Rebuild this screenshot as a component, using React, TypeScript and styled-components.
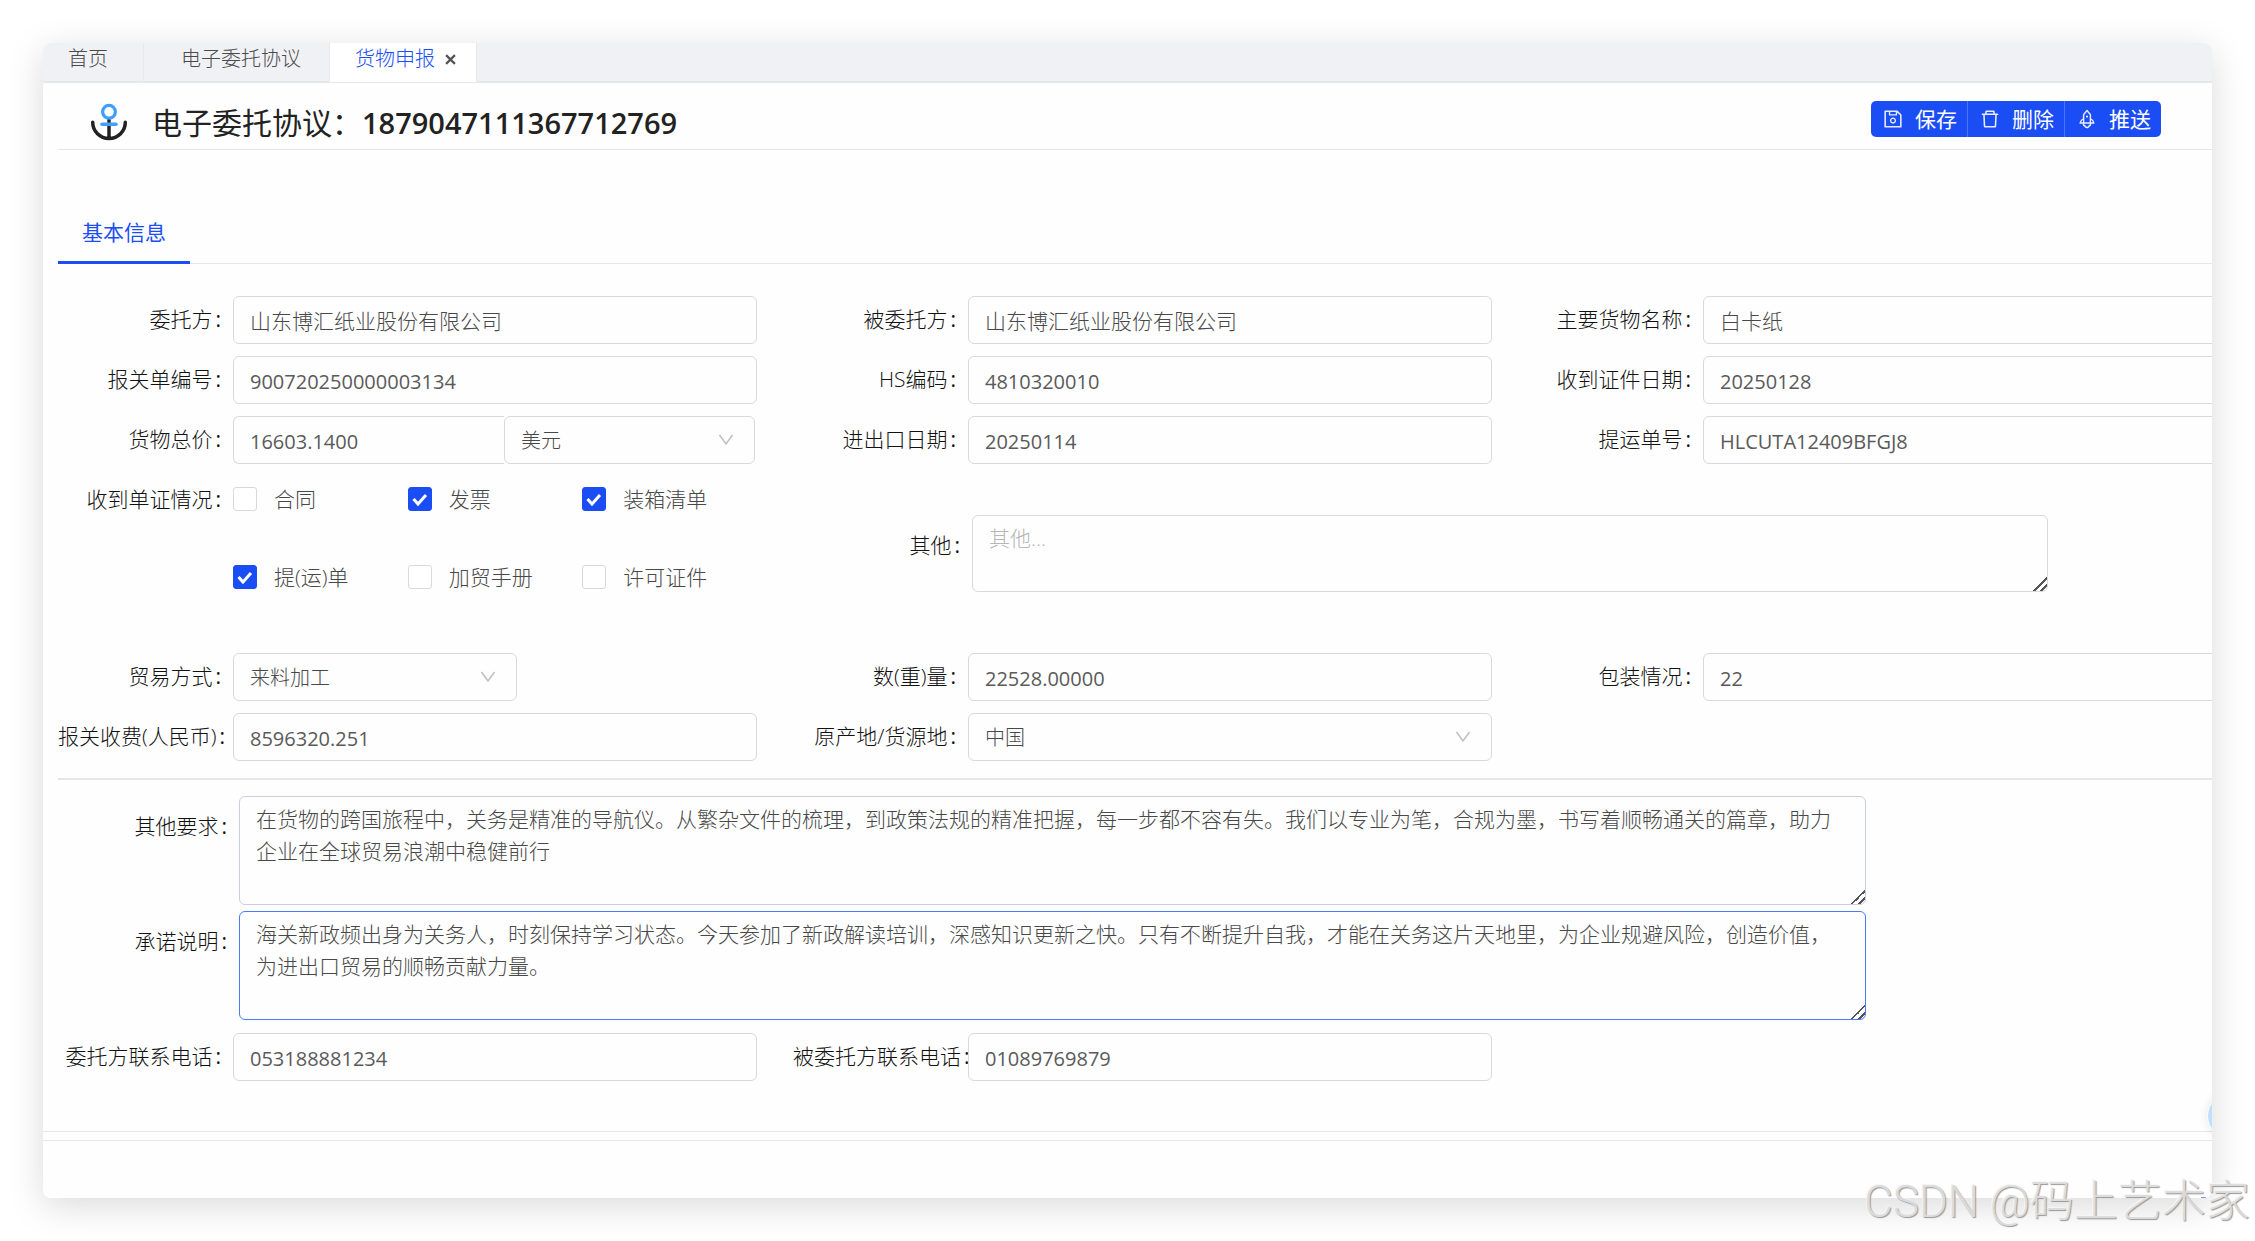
import React from 'react';
import styled, { createGlobalStyle, css } from 'styled-components';
import { AiOutlineDelete, AiOutlineRocket, AiOutlineSave } from 'react-icons/ai';

const sans = `"Open Sans", "Noto Sans CJK SC", "Noto Sans", sans-serif`;
const primary = '#1b4df5';
const line = '#e6e6e6';
const fieldBorder = '#d9d9d9';

const GlobalStyle = createGlobalStyle`
  *, *::before, *::after { box-sizing: border-box; }
  body { margin: 0; background: #fff; }
  body, button, input, select, textarea { font-family: ${sans}; }
`;

const Page = styled.div`
  display: flex;
  min-height: 100vh;
  padding: 43px;
`;

const Card = styled.main`
  position: relative;
  flex: 1;
  min-width: 0;
  overflow: hidden;
  border-radius: 8px;
  background: #fefefe;
`;

const Shadow = styled.div`
  display: flex;
  flex: 1;
  min-width: 0;
  border-radius: 8px;
  box-shadow: 0 8px 36px rgba(0, 0, 0, 0.15);
`;

const TabBar = styled.nav`
  display: flex;
  height: 40px;
  background: #f0f1f5;
  box-shadow: inset 0 -2px #e6e7ea;
`;

const PageTab = styled.div<{ $active?: boolean; $start: number; $end: number }>`
  display: flex;
  gap: 6px;
  height: 39px;
  padding: 0 ${p => p.$end}px 0 ${p => p.$start}px;
  border-right: 1px solid #e8e9ec;
  background: ${p => (p.$active ? '#fff' : 'transparent')};
  line-height: 32px;
`;

const PageLink = styled.a<{ $active?: boolean }>`
  color: ${p => (p.$active ? primary : '#4a4a4a')};
  font-size: 20px;
  font-weight: 300;
  text-decoration: none;
`;

const CloseButton = styled.button`
  display: flex;
  align-items: center;
  height: 32px;
  padding: 0 4px;
  border: 0;
  background: none;
  color: #555;
`;

const Header = styled.header`
  display: flex;
  justify-content: space-between;
  height: 67px;
  margin-left: 15px;
  padding: 18px 51px 0 32px;
  border-bottom: 1px solid ${line};
`;

const Title = styled.h1`
  display: flex;
  align-items: center;
  gap: 24px;
  height: 44px;
  margin: 0;
  color: #222;
  font-size: 30px;
  font-weight: 400;
  line-height: 44px;
  white-space: nowrap;
`;

const Number = styled.span`
  font-size: 29px;
  font-weight: 600;
`;

const ButtonGroup = styled.div`
  display: flex;
  height: 36px;
  overflow: hidden;
  border-radius: 5px;
  background: ${primary};
`;

const ActionButton = styled.button`
  display: flex;
  align-items: center;
  gap: 11px;
  padding: 0 10px 0 11px;
  border: 0;
  background: none;
  color: #fff;
  font-size: 21px;
  line-height: 36px;

  & + & { border-left: 1px solid #4d76fa; }
  svg { width: 22px; height: 22px; opacity: 0.9; }
`;

const SectionTabs = styled.div`
  display: flex;
  align-items: flex-end;
  height: 114px;
  margin-left: 15px;
  box-shadow: inset 0 -1px ${line};
`;

const SectionTab = styled.button`
  height: 64px;
  padding: 0 24px;
  border: 0;
  border-bottom: 3px solid ${primary};
  background: none;
  color: ${primary};
  font-size: 21px;
`;

const Form = styled.form`
  padding: 32px 0 50px 15px;
`;

const Grid = styled.div<{ $after?: number }>`
  display: grid;
  grid-template-columns: repeat(3, minmax(0, 1fr));
  row-gap: 12px;
  margin-right: -51px;
  margin-bottom: ${p => p.$after ?? 0}px;
`;

const Field = styled.div`
  display: flex;
  padding-right: 36px;
`;

const WideField = styled(Field)<{ $end: number }>`
  padding-right: ${p => p.$end}px;
`;

const OtherField = styled(WideField)`
  grid-column: span 2;
  margin-top: 39px;
`;

const labelText = css`
  flex: none;
  width: 175px;
  color: #111;
  font-size: 21px;
  font-weight: 300;
  line-height: 46px;
  text-align: right;
  white-space: nowrap;

  &::after { content: ':'; margin: 0 12px 0 3px; font-weight: 400; }
`;

const Label = styled.label`${labelText}`;

const GroupLabel = styled.span`${labelText}`;

const AreaLabel = styled(Label)<{ $width: number }>`
  width: ${p => p.$width}px;
  padding-top: 7px;
`;

const box = css`
  border: 1px solid ${fieldBorder};
  border-radius: 6px;
  outline: none;
  background: #fefefe;
  color: #484848;
  font-weight: 300;
`;

const TextInput = styled.input<{ $latin?: boolean; $joined?: boolean }>`
  ${box}
  flex: 1;
  min-width: 0;
  height: 48px;
  padding: ${p => (p.$latin ? 3 : 0)}px 16px 0;
  ${p => (p.$latin ? 'color: #5a5a5a; font-size: 20px; font-weight: 400;' : 'font-size: 21px;')}
  ${p => p.$joined && 'border-right: 0; border-radius: 6px 0 0 6px;'}
`;

const SelectWrap = styled.div<{ $width?: number }>`
  position: relative;
  ${p => (p.$width ? `flex: none; width: ${p.$width}px;` : 'flex: 1;')}

  svg {
    position: absolute;
    top: 18px;
    right: 21px;
    pointer-events: none;
  }
`;

const Select = styled.select`
  ${box}
  width: 100%;
  height: 48px;
  padding: 0 16px;
  appearance: none;
  font-size: 20px;
`;

const PriceGroup = styled.div`
  display: flex;
  flex: 1;
  min-width: 0;
  padding-right: 2px;
`;

const CheckGrid = styled.div`
  display: grid;
  flex: 1;
  grid-template-columns: repeat(3, minmax(0, 1fr));
  grid-auto-rows: 46px;
  row-gap: 32px;
`;

const CheckLabel = styled.label`
  display: flex;
  align-items: center;
  gap: 17px;
  color: #484848;
  font-size: 21px;
  font-weight: 300;
  line-height: 26px;
  white-space: nowrap;
`;

const CheckBox = styled.span`
  display: grid;
  width: 24px;
  height: 24px;

  input, svg { grid-area: 1 / 1; }
  input {
    width: 24px;
    height: 24px;
    margin: 0;
    border: 1px solid ${fieldBorder};
    border-radius: 3px;
    appearance: none;
    background: #fff;
  }
  input:checked { border-color: ${primary}; background: ${primary}; }
  svg { z-index: 1; visibility: hidden; pointer-events: none; }
  input:checked + svg { visibility: visible; }
`;

const TextArea = styled.textarea<{ $height: number; $tone?: string }>`
  ${box}
  flex: 1;
  min-width: 0;
  height: ${p => p.$height}px;
  padding: 6px 16px;
  border-color: ${p => p.$tone ?? fieldBorder};
  font-size: 21px;
  line-height: 32px;
  &::placeholder { color: #b5b5b5; }
  &::-webkit-resizer {
    background: linear-gradient(135deg, transparent 52%, #555 52%, #555 60%, transparent 60%, transparent 76%, #555 76%, #555 84%, transparent 84%);
  }
`;

const Divider = styled.hr`
  height: 2px;
  margin: 17px 0 16px;
  border: 0;
  background: #e6e6e6;
`;

const Stack = styled.div`
  display: grid;
  row-gap: 6px;
  margin-bottom: 13px;
`;

const Footer = styled.footer`
  height: 10px;
  border-top: 1px solid ${line};
  border-bottom: 1px solid ${line};
`;

const FloatBall = styled.div`
  position: absolute;
  right: -41px;
  bottom: 59px;
  width: 46px;
  height: 46px;
  border: 1px solid #fff;
  border-radius: 50%;
  background: #c2dfff;
  box-shadow: 0 0 10px rgba(0, 0, 0, 0.1);
`;

const FloatEdge = styled.div`
  position: absolute;
  right: 6px;
  bottom: 0;
  width: 5px;
  height: 1px;
  background: #6f93ff;
`;

const Watermark = styled.div`
  position: absolute;
  right: 5px;
  bottom: 7px;
  color: rgba(222, 222, 222, 0.95);
  font-family: Roboto, "Noto Sans CJK SC", sans-serif;
  font-size: 44px;
  font-weight: 300;
  line-height: 64px;
  text-shadow: 1px 1px 1px #999, -1px -1px 0 #f6f6f6;
  white-space: nowrap;
`;

const Chevron = () => (
  <svg width="16" height="12" viewBox="0 0 16 12" fill="none" stroke="#bfbfbf" strokeWidth="1.5" aria-hidden="true">
    <path d="M1.5 1l6.5 9 6.5-9" />
  </svg>
);

const AnchorIcon = () => (
  <svg width="38" height="40" viewBox="0 0 38 40" fill="none" aria-hidden="true">
    <path d="M2.700 19.200A16.300 16.300 0 0 0 35.300 19.200M19 17v18" stroke="#222" strokeWidth="3.500" strokeLinecap="round" />
    <path d="M12 21.200h14" stroke="#409eff" strokeWidth="3.500" strokeLinecap="round" />
    <circle cx="19" cy="8.800" r="6.400" fill="#fefefe" stroke="#409eff" strokeWidth="3.200" />
  </svg>
);

type InputFieldProps = { id: string; label: string; value: string };

const InputField = ({ id, label, value }: InputFieldProps) => (
  <Field>
    <Label htmlFor={id}>{label}</Label>
    <TextInput id={id} defaultValue={value} $latin={/^[\x20-\x7e]+$/.test(value)} />
  </Field>
);

type CheckProps = { label: string; checked?: boolean };

const Check = ({ label, checked }: CheckProps) => (
  <CheckLabel>
    <CheckBox>
      <input type="checkbox" defaultChecked={checked} />
      <svg width="24" height="24" viewBox="0 0 24 24" fill="none" stroke="#fff" strokeWidth="3" aria-hidden="true">
        <path d="M5.500 12l4.500 5 8-9" />
      </svg>
    </CheckBox>
    {label}
  </CheckLabel>
);

const requirement =
  '在货物的跨国旅程中，关务是精准的导航仪。从繁杂文件的梳理，到政策法规的精准把握，每一步都不容有失。我们以专业为笔，合规为墨，书写着顺畅通关的篇章，助力企业在全球贸易浪潮中稳健前行';
const promise =
  '海关新政频出身为关务人，时刻保持学习状态。今天参加了新政解读培训，深感知识更新之快。只有不断提升自我，才能在关务这片天地里，为企业规避风险，创造价值，为进出口贸易的顺畅贡献力量。';

export default function App() {
  return (
    <>
      <GlobalStyle />
      <Page>
        <Shadow>
          <Card>
            <TabBar>
              <PageTab $start={25} $end={35}>
                <PageLink href="#home">首页</PageLink>
              </PageTab>
              <PageTab $start={37} $end={28}>
                <PageLink href="#agreement">电子委托协议</PageLink>
              </PageTab>
              <PageTab $active $start={25} $end={16}>
                <PageLink href="#declare" $active>货物申报</PageLink>
                <CloseButton type="button" aria-label="关闭">
                  <svg width="11" height="11" viewBox="0 0 10 10" stroke="currentColor" strokeWidth="2">
                    <path d="M1 1l8 8M9 1l-8 8" />
                  </svg>
                </CloseButton>
              </PageTab>
            </TabBar>

            <Header>
              <Title>
                <AnchorIcon />
                <span>电子委托协议：<Number>1879047111367712769</Number></span>
              </Title>
              <ButtonGroup>
                <ActionButton type="button"><AiOutlineSave />保存</ActionButton>
                <ActionButton type="button"><AiOutlineDelete />删除</ActionButton>
                <ActionButton type="button"><AiOutlineRocket />推送</ActionButton>
              </ButtonGroup>
            </Header>

            <SectionTabs>
              <SectionTab type="button">基本信息</SectionTab>
            </SectionTabs>

            <Form>
              <Grid $after={12}>
                <InputField id="client" label="委托方" value="山东博汇纸业股份有限公司" />
                <InputField id="agent" label="被委托方" value="山东博汇纸业股份有限公司" />
                <InputField id="goods" label="主要货物名称" value="白卡纸" />
                <InputField id="declNo" label="报关单编号" value="900720250000003134" />
                <InputField id="hs" label="HS编码" value="4810320010" />
                <InputField id="docDate" label="收到证件日期" value="20250128" />
                <Field>
                  <Label htmlFor="price">货物总价</Label>
                  <PriceGroup>
                    <TextInput id="price" defaultValue="16603.1400" $latin $joined />
                    <SelectWrap $width={251}>
                      <Select aria-label="币制" defaultValue="美元">
                        <option>美元</option>
                      </Select>
                      <Chevron />
                    </SelectWrap>
                  </PriceGroup>
                </Field>
                <InputField id="ieDate" label="进出口日期" value="20250114" />
                <InputField id="billNo" label="提运单号" value="HLCUTA12409BFGJ8" />
              </Grid>

              <Grid $after={53}>
                <Field role="group" aria-labelledby="docs">
                  <GroupLabel id="docs">收到单证情况</GroupLabel>
                  <CheckGrid>
                    <Check label="合同" />
                    <Check label="发票" checked />
                    <Check label="装箱清单" checked />
                    <Check label="提(运)单" checked />
                    <Check label="加贸手册" />
                    <Check label="许可证件" />
                  </CheckGrid>
                </Field>
                <OtherField $end={215}>
                  <AreaLabel htmlFor="other" $width={179}>其他</AreaLabel>
                  <TextArea id="other" placeholder="其他..." $height={77} />
                </OtherField>
              </Grid>

              <Grid>
                <Field>
                  <Label htmlFor="trade">贸易方式</Label>
                  <SelectWrap $width={284}>
                    <Select id="trade" defaultValue="来料加工">
                      <option>来料加工</option>
                    </Select>
                    <Chevron />
                  </SelectWrap>
                </Field>
                <InputField id="amount" label="数(重)量" value="22528.00000" />
                <InputField id="pack" label="包装情况" value="22" />
                <InputField id="fee" label="报关收费(人民币)" value="8596320.251" />
                <Field>
                  <Label htmlFor="origin">原产地/货源地</Label>
                  <SelectWrap>
                    <Select id="origin" defaultValue="中国">
                      <option>中国</option>
                    </Select>
                    <Chevron />
                  </SelectWrap>
                </Field>
              </Grid>

              <Divider />

              <Stack>
                <WideField $end={346}>
                  <AreaLabel htmlFor="requirement" $width={181}>其他要求</AreaLabel>
                  <TextArea id="requirement" defaultValue={requirement} $height={109} $tone="#c9cee2" />
                </WideField>
                <WideField $end={346}>
                  <AreaLabel htmlFor="promise" $width={181}>承诺说明</AreaLabel>
                  <TextArea id="promise" defaultValue={promise} $height={109} $tone="#4a7bf7" />
                </WideField>
              </Stack>

              <Grid>
                <InputField id="clientTel" label="委托方联系电话" value="053188881234" />
                <InputField id="agentTel" label="被委托方联系电话" value="01089769879" />
              </Grid>
            </Form>

            <Footer />
            <FloatBall />
            <FloatEdge />
          </Card>
        </Shadow>
      </Page>
      <Watermark>CSDN @码上艺术家</Watermark>
    </>
  );
}
